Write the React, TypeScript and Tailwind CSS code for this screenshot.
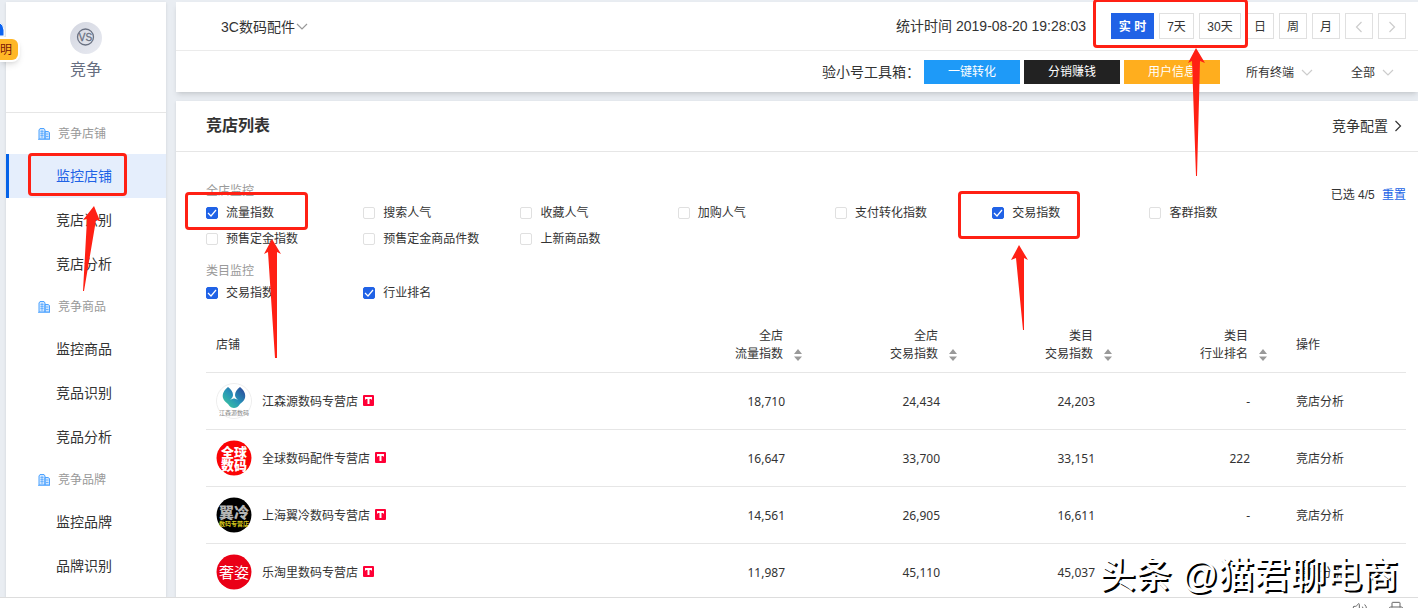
import { ReactNode } from "react";
import clsx from "clsx";
import { Printer, Volume2 } from "lucide-react";

const menu = [
    { title: "竞争店铺", items: ["监控店铺", "竞店识别", "竞店分析"] },
    { title: "竞争商品", items: ["监控商品", "竞品识别", "竞品分析"] },
    { title: "竞争品牌", items: ["监控品牌", "品牌识别"] },
];

const shopMetrics = [
    { name: "流量指数", checked: true },
    { name: "搜索人气" },
    { name: "收藏人气" },
    { name: "加购人气" },
    { name: "支付转化指数" },
    { name: "交易指数", checked: true },
    { name: "客群指数" },
    { name: "预售定金指数" },
    { name: "预售定金商品件数" },
    { name: "上新商品数" },
];

const categoryMetrics = [
    { name: "交易指数", checked: true },
    { name: "行业排名", checked: true },
];

const columns = [
    ["全店", "流量指数"],
    ["全店", "交易指数"],
    ["类目", "交易指数"],
    ["类目", "行业排名"],
];

const shops = [
    { name: "江森源数码专营店", logo: <LogoJsy />, values: ["18,710", "24,434", "24,203", "-"] },
    { name: "全球数码配件专营店", logo: <LogoGlobal />, values: ["16,647", "33,700", "33,151", "222"] },
    { name: "上海翼冷数码专营店", logo: <LogoYileng />, values: ["14,561", "26,905", "16,611", "-"] },
    { name: "乐淘里数码专营店", logo: <LogoShezi />, values: ["11,987", "45,110", "45,037", "-"] },
];

function LogoJsy() {
    return (
        <svg viewBox="0 0 36 36" className="size-9 shrink-0" aria-hidden="true">
            <defs>
                <linearGradient id="jsy" x1="0" y1="1" x2="1" y2="0">
                    <stop offset="0" stopColor="#3fd09a" />
                    <stop offset="0.5" stopColor="#2793b8" />
                    <stop offset="1" stopColor="#2b3f96" />
                </linearGradient>
            </defs>
            <circle cx="18" cy="18" r="17.5" fill="#fff" stroke="#eee" />
            <path d="M12 4C8 7 6 11 7 15c1 3 3 4 5 6 2 3 4 4 6 4s4-1 6-4c2-2 4-3 5-6 1-4-1-8-5-11-3 2-5 5-5 8 0 2 1 3 3 5-2-1-3-1.500-4-1.500s-2 .5-4 1.500c2-2 3-3 3-5 0-3-2-6-5-8z" fill="url(#jsy)" />
            <text x="18" y="32" textAnchor="middle" fontSize="6" fill="#888">江森源数码</text>
        </svg>
    );
}

function LogoGlobal() {
    return (
        <svg viewBox="0 0 36 36" className="size-9 shrink-0 rounded-full" aria-hidden="true">
            <circle cx="18" cy="18" r="17.5" fill="#fb0406" />
            <g fill="#fff" fontSize="13" fontWeight="900" textAnchor="middle">
                <text x="18" y="17">全球</text>
                <text x="18" y="30">数码</text>
            </g>
        </svg>
    );
}

function LogoYileng() {
    return (
        <svg viewBox="0 0 36 36" className="size-9 shrink-0 rounded-full" aria-hidden="true">
            <circle cx="18" cy="18" r="17.5" fill="#000" />
            <text x="18" y="21" textAnchor="middle" fontSize="15" fontWeight="900" fill="#b5b5b5">翼冷</text>
            <text x="18" y="29" textAnchor="middle" fontSize="6" fontWeight="700" fill="#d8c81c">数码专营店</text>
        </svg>
    );
}

function LogoShezi() {
    return (
        <svg viewBox="0 0 36 36" className="size-9 shrink-0 rounded-full" aria-hidden="true">
            <circle cx="18" cy="18" r="17.5" fill="#ea0016" />
            <text x="18" y="24" textAnchor="middle" fontSize="15" fill="#fff">奢姿</text>
        </svg>
    );
}

const Chevron = ({ d, className }: { d: string; className?: string }) => (
    <svg viewBox="0 0 12 12" className={clsx("size-3 shrink-0 fill-none", className)} stroke="currentColor" strokeWidth="1.2" aria-hidden="true">
        <path d={d} />
    </svg>
);

const DOWN = "M1 4l5 5 5-5";
const LEFT = "M8.5 1l-5 5 5 5";
const RIGHT = "M3.5 1l5 5-5 5";

const BuildingIcon = () => (
    <svg viewBox="0 0 12 12" className="size-3" aria-hidden="true">
        <path d="M1 11V2l1-1.500h4L7 2v9zM7 3.500h3l1.500 1V11H7z" fill="#cfe5ff" stroke="#4da3ff" />
        <path d="M2.500 3.500h3M2.500 5.500h3M2.500 7.500h3M4 2v8M8 6h2.500M8 8.500h2.500M0 11.400h12" stroke="#6bb2ff" strokeWidth="1" />
    </svg>
);

const Marker = ({ className }: { className: string }) => (
    <span className={clsx("pointer-events-none absolute z-10 rounded-sm border-3 border-[#ff2014]", className)} />
);

const Arrow = ({ width, height, points, className }: { width: number; height: number; points: string; className: string }) => (
    <svg width={width} height={height} viewBox={`0 0 ${width} ${height}`} className={clsx("pointer-events-none absolute z-10", className)} aria-hidden="true">
        <polygon points={points} fill="#ff2014" />
    </svg>
);

const Select = ({ label, value, className, iconClass }: { label: string; value: string; className: string; iconClass?: string }) => (
    <div className={clsx("relative flex items-center", className)}>
        <select aria-label={label} className="w-full appearance-none bg-transparent pt-0.5 outline-none">
            <option>{value}</option>
        </select>
        <Chevron d={DOWN} className={clsx("pointer-events-none absolute right-0", iconClass)} />
    </div>
);

const Metric = ({ name, checked, children }: { name: string; checked?: boolean; children?: ReactNode }) => (
    <div className="relative flex h-[26px] items-center">
        <label className="flex items-center gap-2 whitespace-nowrap">
            <span className="grid">
                <input type="checkbox" defaultChecked={checked} className="peer col-start-1 row-start-1 size-3 appearance-none rounded-xs border border-[#e0e0e0] bg-white checked:border-[#2062e6] checked:bg-[#2062e6]" />
                <svg viewBox="0 0 12 12" className="pointer-events-none invisible col-start-1 row-start-1 size-3 fill-none stroke-white peer-checked:visible" aria-hidden="true">
                    <path d="M2 6l3 3 5-6" strokeWidth="1.2" />
                </svg>
            </span>
            {name}
        </label>
        {children}
    </div>
);

const Sidebar = () => (
    <nav className="w-40 shrink-0 bg-white shadow-sm">
        <div className="flex h-[111px] flex-col items-center border-b border-[#e6e6e6] pt-5 text-base text-[#666e80]">
            <svg viewBox="0 0 32 32" className="size-8" aria-hidden="true">
                <defs>
                    <linearGradient id="vs" x1="0" y1="0" x2="1" y2="1">
                        <stop offset="0" stopColor="#d3d6e0" />
                        <stop offset="1" stopColor="#e9ebf2" />
                    </linearGradient>
                </defs>
                <circle cx="16" cy="16" r="16" fill="url(#vs)" />
                <circle cx="15.5" cy="15" r="8" fill="none" stroke="#6a7182" strokeWidth="1.3" />
                <text x="15.5" y="18.5" textAnchor="middle" fontSize="10" fill="#6a7182" stroke="#6a7182" strokeWidth="0.3" fontFamily="Liberation Sans">VS</text>
            </svg>
            <div className="mt-1">竞争</div>
        </div>
        {menu.map((group) => (
            <div key={group.title}>
                <div className="flex h-[41px] items-center gap-2 pl-8 text-xs text-[#999]">
                    <BuildingIcon />
                    {group.title}
                </div>
                <ul>
                    {group.items.map((item) => {
                        const active = item === "监控店铺";
                        return (
                            <li key={item} className={clsx("relative h-11 border-l-3", active ? "border-[#0563e8] bg-[#e5eefc] text-[#2062e6]" : "border-transparent")}>
                                <a href="#" className="flex h-full items-center pl-[47px] text-sm">{item}</a>
                                {active && (
                                    <>
                                        <Marker className="left-[19px] -top-px h-[43px] w-[99px]" />
                                        <Arrow width={17} height={85} points="11,0 17,15 13,14 1,85 0,85 4,13 0,14" className="left-[74px] top-[52px]" />
                                    </>
                                )}
                            </li>
                        );
                    })}
                </ul>
            </div>
        ))}
    </nav>
);

const dateButton = "flex h-[26px] items-center justify-center border border-[#e0e0e0] bg-white pt-0.5";

const Toolbar = () => (
    <header className="bg-white shadow-md">
        <div className="flex h-[49px] items-center justify-between border-b border-[#ebebeb] pr-3 pl-[45px]">
            <Select label="类目" value="3C数码配件" className="w-[87px] text-sm" iconClass="text-[#999]" />
            <div className="flex items-center gap-[5px]">
                <span className="mr-5 text-sm">统计时间 2019-08-20 19:28:03</span>
                <div className="relative flex gap-[5px]">
                    <button className="h-[26px] w-[43px] bg-[#2062e6] pt-0.5 font-bold text-white">实 时</button>
                    <button className={clsx(dateButton, "w-[35px]")}>7天</button>
                    <button className={clsx(dateButton, "w-[42px]")}>30天</button>
                    <Marker className="-top-3.5 -left-[18px] h-[49px] w-[155px]" />
                    <Arrow width={17} height={128} points="8,0 17,15 12,13 9,128 8,128 4,13 0,15" className="top-[35px] left-[77px]" />
                </div>
                <button className={clsx(dateButton, "w-7")}>日</button>
                <button className={clsx(dateButton, "w-7")}>周</button>
                <button className={clsx(dateButton, "w-7")}>月</button>
                <button aria-label="上一天" className={clsx(dateButton, "w-7 text-[#ccc]")}><Chevron d={LEFT} /></button>
                <button aria-label="下一天" className={clsx(dateButton, "w-7 text-[#ccc]")}><Chevron d={RIGHT} /></button>
            </div>
        </div>
        <div className="flex h-[41px] items-center justify-end pr-6">
            <span className="mr-1 text-sm">验小号工具箱：</span>
            <div className="flex gap-1 text-white">
                <button className="h-6 w-24 bg-[#1e9af8]">一键转化</button>
                <button className="h-6 w-24 bg-[#222]">分销赚钱</button>
                <button className="h-6 w-24 bg-[#ffae1e]">用户信息</button>
            </div>
            <Select label="终端" value="所有终端" className="ml-[26px] w-[67px]" iconClass="text-[#ccc]" />
            <Select label="店铺类型" value="全部" className="ml-[38px] w-[43px]" iconClass="text-[#ccc]" />
        </div>
    </header>
);

const Metrics = () => (
    <div className="flex gap-6 pt-[29px] pr-3 pl-[30px]">
        <div className="flex-1">
            <div className="pt-px text-[#999]">全店监控</div>
            <div className="grid grid-cols-7">
                {shopMetrics.map((m) => (
                    <Metric key={m.name} {...m}>
                        {m.name === "流量指数" && (
                            <>
                                <Marker className="-top-2 -left-[21px] h-[38px] w-[123px]" />
                                <Arrow width={17} height={119} points="8,0 17,15 13,13 13,119 11,119 4,13 0,15" className="top-[39px] left-[58px]" />
                            </>
                        )}
                        {m.name === "交易指数" && (
                            <>
                                <Marker className="-top-[9px] -left-[34px] h-12 w-[122px]" />
                                <Arrow width={17} height={85} points="8,0 17,15 13,13 13,85 12,85 5,13 0,15" className="top-[45px] left-[19px]" />
                            </>
                        )}
                    </Metric>
                ))}
            </div>
            <div className="mt-2.5 text-[#999]">类目监控</div>
            <div className="grid grid-cols-7">
                {categoryMetrics.map((m) => <Metric key={m.name} {...m} />)}
            </div>
        </div>
        <div className="mt-[5px] shrink-0 whitespace-nowrap">
            已选 4/5 <button className="ml-1 text-[#2062e6]">重置</button>
        </div>
    </div>
);

const ShopTable = () => (
    <div className="mt-2.5 pr-3 pl-[30px]">
        <table className="w-full table-fixed">
            <thead>
                <tr className="h-14 border-b border-[#e6e6e6]">
                    <th className="pt-0.5 pl-2.5 text-left font-normal">店铺</th>
                    {columns.map(([scope, name]) => (
                        <th key={scope + name} className="w-[155px] pt-0.5 pr-[19px] font-normal">
                            <div className="flex items-end justify-end gap-[11px] text-right">
                                <span>{scope}<br />{name}</span>
                                <button aria-label={`按${scope}${name}排序`} className="mb-0.5">
                                    <svg viewBox="0 0 8 12" className="h-3 w-2 fill-[#999]" aria-hidden="true">
                                        <path d="M4 0l4 5H0zM4 12L0 7.500h8z" />
                                    </svg>
                                </button>
                            </div>
                        </th>
                    ))}
                    <th className="w-[120px] pt-0.5 pl-2.5 text-left font-normal">操作</th>
                </tr>
            </thead>
            <tbody>
                {shops.map((shop) => (
                    <tr key={shop.name} className="h-[57px] border-b border-[#e6e6e6]">
                        <td className="pl-2.5">
                            <div className="flex items-center">
                                {shop.logo}
                                <a href="#" className="ml-2.5 pt-0.5">{shop.name}</a>
                                <svg viewBox="0 0 11 11" className="ml-[5px] size-[11px]" role="img" aria-label="天猫">
                                    <rect width="11" height="11" rx="1" fill="#ff0036" />
                                    <path d="M2 2h7v2.500H8V4H6.500v5h-2V4H3v.5H2z" fill="#fff" />
                                </svg>
                            </div>
                        </td>
                        {shop.values.map((value, i) => (
                            <td key={i} className="pt-0.5 pr-9 text-right font-['Noto_Sans','Noto_Sans_CJK_SC',sans-serif]">{value}</td>
                        ))}
                        <td className="pt-0.5 pl-2.5"><a href="#">竞店分析</a></td>
                    </tr>
                ))}
            </tbody>
        </table>
    </div>
);

const App = () => {
    return (
        <div className="relative flex h-screen flex-col overflow-hidden bg-[#e9edf2] font-['Liberation_Sans','Noto_Sans_CJK_SC',sans-serif] text-xs/[18px] text-[#333]">
            <div className="flex min-h-0 flex-1 gap-2.5 overflow-hidden pt-0.5 pl-1.5">
                <Sidebar />
                <main className="flex min-w-0 flex-1 flex-col gap-[9px]">
                    <Toolbar />
                    <section className="flex-1 bg-white shadow-sm">
                        <div className="flex h-[51px] items-center justify-between border-b border-[#e6e6e6] pr-3.5 pl-[30px]">
                            <h1 className="text-base font-bold">竞店列表</h1>
                            <a href="#" className="flex items-center gap-1 text-sm">竞争配置<Chevron d={RIGHT} /></a>
                        </div>
                        <Metrics />
                        <ShopTable />
                    </section>
                </main>
            </div>
            <footer className="flex h-[11px] shrink-0 justify-end gap-5 overflow-hidden border-t border-[#ddd] bg-white pt-[3px] pr-3.5 text-[#666]">
                <Volume2 className="size-4 shrink-0" strokeWidth={1.5} />
                <Printer className="size-4 shrink-0" strokeWidth={1.5} />
            </footer>

            {/* floating helper on the left edge */}
            <div className="absolute top-[17px] left-0">
                <svg viewBox="0 0 6 20" className="h-5 w-1.5" aria-hidden="true">
                    <path d="M-1 5q5 3 5 8v6H-1z" fill="#0b63f0" stroke="#fff" />
                </svg>
                <button className="flex h-[25px] w-5 items-center rounded-r-lg border-2 border-l-0 border-white bg-[#ffb726] text-[#7a1408] shadow-md">明</button>
            </div>

            <div className="pointer-events-none absolute right-5 bottom-3 text-4xl font-medium whitespace-nowrap text-white [text-shadow:2px_2px_0_#000]">
                头条 @猫君聊电商
            </div>
        </div>
    );
};

export default App;
